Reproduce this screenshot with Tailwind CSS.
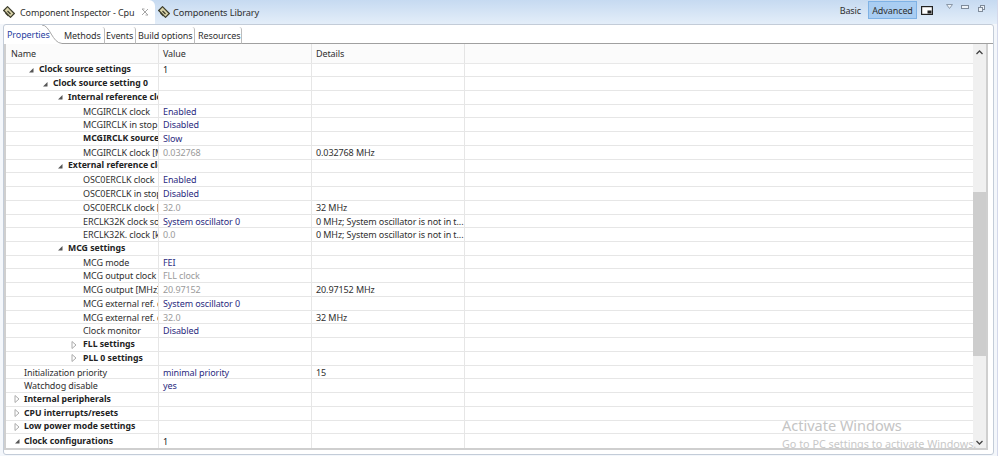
<!DOCTYPE html>
<html>
<head>
<meta charset="utf-8">
<script src="https://cdn.jsdelivr.net/npm/@tailwindcss/browser@4"></script>
</head>
<body class="m-0 overflow-hidden bg-white">
<div class="w-[998px] h-[456px] relative flex flex-col overflow-hidden bg-[#f4f7fb] border-r border-[#d4d8ea] text-[9px] tracking-[-0.1px] leading-[13px] text-[#2f2f2f] font-['Noto_Sans','Open_Sans',sans-serif]">
  <!-- top view tabs -->
  <div class="h-[24px] flex items-start bg-gradient-to-b from-[#c6daf1] to-[#e4eef9] shrink-0">
    <div class="w-[155px] h-[24px] bg-white rounded-tr-[6px] flex items-center pl-[3px] gap-[5px] text-[9px] whitespace-nowrap shrink-0">
      <svg class="shrink-0" width="12" height="12" viewBox="0 0 12 12"><path d="M0.7 4.5 L4.5 0.7 L11.3 7.5 L7.5 11.3 Z" fill="#d8d2a8" stroke="#3b3b2a" stroke-width="1.2"/><path d="M2.5 7 L5.5 10 M4.5 5 L7.5 8" stroke="#3b3b2a" stroke-width="1.2"/></svg>
      <span>Component Inspector - Cpu</span>
      <svg class="shrink-0 ml-[2px]" width="8" height="8" viewBox="0 0 8 8"><path d="M1 1 L7 7 M7 1 L1 7 M1 1 H3.5 M4.5 7 H7" stroke="#a5a5a5" stroke-width="1" fill="none"/></svg>
    </div>
    <div class="flex items-center gap-[3px] pl-[3px] h-[24px] text-[9.2px] whitespace-nowrap">
      <svg class="shrink-0" width="12" height="12" viewBox="0 0 12 12"><path d="M0.7 4.5 L4.5 0.7 L11.3 7.5 L7.5 11.3 Z" fill="#d8d2a8" stroke="#3b3b2a" stroke-width="1.2"/><path d="M2.5 7 L5.5 10 M4.5 5 L7.5 8" stroke="#3b3b2a" stroke-width="1.2"/></svg>
      <span>Components Library</span>
    </div>
    <div class="ml-auto flex items-start pr-[12px] whitespace-nowrap">
      <span class="mt-[4px] mr-[7px]">Basic</span>
      <span class="mt-[1px] h-[18px] w-[49px] bg-[#a9cdf2] border border-[#7fb2e5] flex items-center justify-center mr-[4px]">Advanced</span>
      <svg class="mt-[6px] mr-[13px]" width="12" height="9" viewBox="0 0 12 9"><rect x="0.6" y="0.6" width="10.8" height="7.8" fill="#fff" stroke="#222" stroke-width="1.2"/><rect x="6.5" y="4.5" width="4" height="3" fill="#222"/></svg>
      <svg class="mt-[4px] mr-[8px]" width="7" height="5" viewBox="0 0 7 5"><path d="M0.5 0.5 H6.5 L3.5 4.5 Z" fill="#eef3f8" stroke="#8b98a8"/></svg>
      <svg class="mt-[5px] mr-[9px]" width="8" height="4" viewBox="0 0 8 4"><rect x="0.5" y="0.5" width="7" height="3" fill="#eef3f8" stroke="#7f8b9a"/></svg>
      <svg class="mt-[5px]" width="7" height="7" viewBox="0 0 7 7"><rect x="2.5" y="0.5" width="4" height="4" fill="#eef3f8" stroke="#7f8b9a"/><rect x="0.5" y="2.5" width="4" height="4" fill="#eef3f8" stroke="#7f8b9a"/></svg>
    </div>
  </div>
  <!-- panel -->
  <div class="absolute left-[3px] top-[24px] w-[991px] h-[431px] bg-white border border-[#c3ccd8] rounded-[3px] flex flex-col">
    <!-- sub tabs -->
    <div class="h-[19px] flex items-end shrink-0 text-[#303030] whitespace-nowrap">
      <div class="relative w-[58px] h-[19px] flex items-center pl-[3px] text-[#2a3f9f]">
        <span>Properties</span>
        <svg class="absolute left-[38px] top-0" width="20" height="19" viewBox="0 0 20 19"><path d="M0 0 C8 0 10 18 20 18.5" fill="none" stroke="#a8a8a8"/></svg>
      </div>
      <div class="w-[43px] h-[17px] flex items-center pl-[2px] border-r border-b border-b-[#a0a0a0] border-r-[#bcbcbc] rounded-tr-[3px]">Methods</div>
      <div class="w-[31px] h-[17px] flex items-center pl-[1px] border-r border-b border-b-[#a0a0a0] border-r-[#bcbcbc] rounded-tr-[3px]">Events</div>
      <div class="w-[59px] h-[17px] flex items-center pl-[2px] border-r border-b border-b-[#a0a0a0] border-r-[#bcbcbc] rounded-tr-[3px]">Build options</div>
      <div class="w-[47px] h-[17px] flex items-center pl-[3px] border-r border-b border-b-[#a0a0a0] border-r-[#bcbcbc] rounded-tr-[3px]">Resources</div>
      <div class="flex-1 h-[17px] border-b border-[#a0a0a0]"></div>
    </div>
    <!-- body -->
    <div class="h-[406px] mr-[5px] shrink-0 flex border-l-[2px] border-r-[2px] border-b-[2px] border-[#cfcfcf] min-h-0">
      <div class="flex-1 flex flex-col min-w-0">
        <div class="h-[19.5px] grid grid-cols-[153px_153px_153px_1fr] items-center bg-[#fbfbfb] border-b border-[#e8e8e8] shrink-0">
          <div class="pl-[5px] pt-[1px] border-r border-[#e4e4e4] h-full flex items-center">Name</div>
          <div class="pl-[4px] pt-[1px] border-r border-[#e4e4e4] h-full flex items-center">Value</div>
          <div class="pl-[4px] pt-[1px] border-r border-[#e4e4e4] h-full flex items-center">Details</div>
          <div></div>
        </div>
        <div class="flex-1 grid grid-rows-[repeat(28,1fr)] min-h-0">

<div class="grid grid-cols-[153px_153px_153px_1fr] border-b border-[#e6e6e6] min-h-0"><div class="border-r border-[#e6e6e6] overflow-hidden whitespace-nowrap flex items-center font-bold text-[#222] text-[8.7px] tracking-normal pl-[22px]"><span class="w-[11px] shrink-0"><svg width="6" height="6" viewBox="0 0 6 6"><path d="M5.5 1 V5.5 H1 Z" fill="#555"/></svg></span>Clock source settings</div><div class="border-r border-[#e6e6e6] pl-[4px] flex items-center whitespace-nowrap overflow-hidden text-[#222]">1</div><div class="border-r border-[#e6e6e6]"></div><div></div></div>
<div class="grid grid-cols-[153px_153px_153px_1fr] border-b border-[#e6e6e6] min-h-0"><div class="border-r border-[#e6e6e6] overflow-hidden whitespace-nowrap flex items-center font-bold text-[#222] text-[8.7px] tracking-normal pl-[36px]"><span class="w-[11px] shrink-0"><svg width="6" height="6" viewBox="0 0 6 6"><path d="M5.5 1 V5.5 H1 Z" fill="#555"/></svg></span>Clock source setting 0</div><div class="border-r border-[#e6e6e6]"></div><div class="border-r border-[#e6e6e6]"></div><div></div></div>
<div class="grid grid-cols-[153px_153px_153px_1fr] border-b border-[#e6e6e6] min-h-0"><div class="border-r border-[#e6e6e6] overflow-hidden whitespace-nowrap flex items-center font-bold text-[#222] text-[8.7px] tracking-normal pl-[51px]"><span class="w-[11px] shrink-0"><svg width="6" height="6" viewBox="0 0 6 6"><path d="M5.5 1 V5.5 H1 Z" fill="#555"/></svg></span>Internal reference clock</div><div class="border-r border-[#e6e6e6]"></div><div class="border-r border-[#e6e6e6]"></div><div></div></div>
<div class="grid grid-cols-[153px_153px_153px_1fr] border-b border-[#e6e6e6] min-h-0"><div class="border-r border-[#e6e6e6] overflow-hidden whitespace-nowrap flex items-center pl-[77px]">MCGIRCLK clock</div><div class="border-r border-[#e6e6e6] pl-[4px] flex items-center text-[#2b2b80]">Enabled</div><div class="border-r border-[#e6e6e6]"></div><div></div></div>
<div class="grid grid-cols-[153px_153px_153px_1fr] border-b border-[#e6e6e6] min-h-0"><div class="border-r border-[#e6e6e6] overflow-hidden whitespace-nowrap flex items-center pl-[77px]">MCGIRCLK in stop</div><div class="border-r border-[#e6e6e6] pl-[4px] flex items-center text-[#2b2b80]">Disabled</div><div class="border-r border-[#e6e6e6]"></div><div></div></div>
<div class="grid grid-cols-[153px_153px_153px_1fr] border-b border-[#e6e6e6] min-h-0"><div class="border-r border-[#e6e6e6] overflow-hidden whitespace-nowrap flex items-center pl-[77px] font-bold text-[#222] text-[8.7px] tracking-normal">MCGIRCLK source</div><div class="border-r border-[#e6e6e6] pl-[4px] flex items-center text-[#2b2b80]">Slow</div><div class="border-r border-[#e6e6e6]"></div><div></div></div>
<div class="grid grid-cols-[153px_153px_153px_1fr] border-b border-[#e6e6e6] min-h-0"><div class="border-r border-[#e6e6e6] overflow-hidden whitespace-nowrap flex items-center pl-[77px]">MCGIRCLK clock [MHz]</div><div class="border-r border-[#e6e6e6] pl-[4px] flex items-center text-[#9a9a9a]">0.032768</div><div class="border-r border-[#e6e6e6] pl-[4px] flex items-center">0.032768 MHz</div><div></div></div>
<div class="grid grid-cols-[153px_153px_153px_1fr] border-b border-[#e6e6e6] min-h-0"><div class="border-r border-[#e6e6e6] overflow-hidden whitespace-nowrap flex items-center font-bold text-[#222] text-[8.7px] tracking-normal pl-[51px]"><span class="w-[11px] shrink-0"><svg width="6" height="6" viewBox="0 0 6 6"><path d="M5.5 1 V5.5 H1 Z" fill="#555"/></svg></span>External reference clock</div><div class="border-r border-[#e6e6e6]"></div><div class="border-r border-[#e6e6e6]"></div><div></div></div>
<div class="grid grid-cols-[153px_153px_153px_1fr] border-b border-[#e6e6e6] min-h-0"><div class="border-r border-[#e6e6e6] overflow-hidden whitespace-nowrap flex items-center pl-[77px]">OSC0ERCLK clock</div><div class="border-r border-[#e6e6e6] pl-[4px] flex items-center text-[#2b2b80]">Enabled</div><div class="border-r border-[#e6e6e6]"></div><div></div></div>
<div class="grid grid-cols-[153px_153px_153px_1fr] border-b border-[#e6e6e6] min-h-0"><div class="border-r border-[#e6e6e6] overflow-hidden whitespace-nowrap flex items-center pl-[77px]">OSC0ERCLK in stop</div><div class="border-r border-[#e6e6e6] pl-[4px] flex items-center text-[#2b2b80]">Disabled</div><div class="border-r border-[#e6e6e6]"></div><div></div></div>
<div class="grid grid-cols-[153px_153px_153px_1fr] border-b border-[#e6e6e6] min-h-0"><div class="border-r border-[#e6e6e6] overflow-hidden whitespace-nowrap flex items-center pl-[77px]">OSC0ERCLK clock [MHz]</div><div class="border-r border-[#e6e6e6] pl-[4px] flex items-center text-[#9a9a9a]">32.0</div><div class="border-r border-[#e6e6e6] pl-[4px] flex items-center">32 MHz</div><div></div></div>
<div class="grid grid-cols-[153px_153px_153px_1fr] border-b border-[#e6e6e6] min-h-0"><div class="border-r border-[#e6e6e6] overflow-hidden whitespace-nowrap flex items-center pl-[77px]">ERCLK32K clock source</div><div class="border-r border-[#e6e6e6] pl-[4px] flex items-center text-[#2b2b80] whitespace-nowrap">System oscillator 0</div><div class="border-r border-[#e6e6e6] pl-[4px] flex items-center whitespace-nowrap overflow-hidden">0 MHz; System oscillator is not in t...</div><div></div></div>
<div class="grid grid-cols-[153px_153px_153px_1fr] border-b border-[#e6e6e6] min-h-0"><div class="border-r border-[#e6e6e6] overflow-hidden whitespace-nowrap flex items-center pl-[77px]">ERCLK32K. clock [kHz]</div><div class="border-r border-[#e6e6e6] pl-[4px] flex items-center text-[#9a9a9a]">0.0</div><div class="border-r border-[#e6e6e6] pl-[4px] flex items-center whitespace-nowrap overflow-hidden">0 MHz; System oscillator is not in t...</div><div></div></div>
<div class="grid grid-cols-[153px_153px_153px_1fr] border-b border-[#e6e6e6] min-h-0"><div class="border-r border-[#e6e6e6] overflow-hidden whitespace-nowrap flex items-center font-bold text-[#222] text-[8.7px] tracking-normal pl-[51px]"><span class="w-[11px] shrink-0"><svg width="6" height="6" viewBox="0 0 6 6"><path d="M5.5 1 V5.5 H1 Z" fill="#555"/></svg></span>MCG settings</div><div class="border-r border-[#e6e6e6]"></div><div class="border-r border-[#e6e6e6]"></div><div></div></div>
<div class="grid grid-cols-[153px_153px_153px_1fr] border-b border-[#e6e6e6] min-h-0"><div class="border-r border-[#e6e6e6] overflow-hidden whitespace-nowrap flex items-center pl-[77px]">MCG mode</div><div class="border-r border-[#e6e6e6] pl-[4px] flex items-center text-[#2b2b80]">FEI</div><div class="border-r border-[#e6e6e6]"></div><div></div></div>
<div class="grid grid-cols-[153px_153px_153px_1fr] border-b border-[#e6e6e6] min-h-0"><div class="border-r border-[#e6e6e6] overflow-hidden whitespace-nowrap flex items-center pl-[77px]">MCG output clock</div><div class="border-r border-[#e6e6e6] pl-[4px] flex items-center text-[#9a9a9a]">FLL clock</div><div class="border-r border-[#e6e6e6]"></div><div></div></div>
<div class="grid grid-cols-[153px_153px_153px_1fr] border-b border-[#e6e6e6] min-h-0"><div class="border-r border-[#e6e6e6] overflow-hidden whitespace-nowrap flex items-center pl-[77px]">MCG output [MHz]</div><div class="border-r border-[#e6e6e6] pl-[4px] flex items-center text-[#9a9a9a]">20.97152</div><div class="border-r border-[#e6e6e6] pl-[4px] flex items-center">20.97152 MHz</div><div></div></div>
<div class="grid grid-cols-[153px_153px_153px_1fr] border-b border-[#e6e6e6] min-h-0"><div class="border-r border-[#e6e6e6] overflow-hidden whitespace-nowrap flex items-center pl-[77px]">MCG external ref. clock</div><div class="border-r border-[#e6e6e6] pl-[4px] flex items-center text-[#2b2b80] whitespace-nowrap">System oscillator 0</div><div class="border-r border-[#e6e6e6]"></div><div></div></div>
<div class="grid grid-cols-[153px_153px_153px_1fr] border-b border-[#e6e6e6] min-h-0"><div class="border-r border-[#e6e6e6] overflow-hidden whitespace-nowrap flex items-center pl-[77px]">MCG external ref. clock</div><div class="border-r border-[#e6e6e6] pl-[4px] flex items-center text-[#9a9a9a]">32.0</div><div class="border-r border-[#e6e6e6] pl-[4px] flex items-center">32 MHz</div><div></div></div>
<div class="grid grid-cols-[153px_153px_153px_1fr] border-b border-[#e6e6e6] min-h-0"><div class="border-r border-[#e6e6e6] overflow-hidden whitespace-nowrap flex items-center pl-[77px]">Clock monitor</div><div class="border-r border-[#e6e6e6] pl-[4px] flex items-center text-[#2b2b80]">Disabled</div><div class="border-r border-[#e6e6e6]"></div><div></div></div>
<div class="grid grid-cols-[153px_153px_153px_1fr] border-b border-[#e6e6e6] min-h-0"><div class="border-r border-[#e6e6e6] overflow-hidden whitespace-nowrap flex items-center font-bold text-[#222] text-[8.7px] tracking-normal pl-[65px]"><span class="w-[12px] shrink-0"><svg width="6" height="8" viewBox="0 0 6 8"><path d="M1 0.5 L5 4 L1 7.5 Z" fill="#fff" stroke="#aaa"/></svg></span>FLL settings</div><div class="border-r border-[#e6e6e6]"></div><div class="border-r border-[#e6e6e6]"></div><div></div></div>
<div class="grid grid-cols-[153px_153px_153px_1fr] border-b border-[#e6e6e6] min-h-0"><div class="border-r border-[#e6e6e6] overflow-hidden whitespace-nowrap flex items-center font-bold text-[#222] text-[8.7px] tracking-normal pl-[65px]"><span class="w-[12px] shrink-0"><svg width="6" height="8" viewBox="0 0 6 8"><path d="M1 0.5 L5 4 L1 7.5 Z" fill="#fff" stroke="#aaa"/></svg></span>PLL 0 settings</div><div class="border-r border-[#e6e6e6]"></div><div class="border-r border-[#e6e6e6]"></div><div></div></div>
<div class="grid grid-cols-[153px_153px_153px_1fr] border-b border-[#e6e6e6] min-h-0"><div class="border-r border-[#e6e6e6] overflow-hidden whitespace-nowrap flex items-center pl-[18px]">Initialization priority</div><div class="border-r border-[#e6e6e6] pl-[4px] flex items-center text-[#2b2b80]">minimal priority</div><div class="border-r border-[#e6e6e6] pl-[4px] flex items-center">15</div><div></div></div>
<div class="grid grid-cols-[153px_153px_153px_1fr] border-b border-[#e6e6e6] min-h-0"><div class="border-r border-[#e6e6e6] overflow-hidden whitespace-nowrap flex items-center pl-[18px]">Watchdog disable</div><div class="border-r border-[#e6e6e6] pl-[4px] flex items-center text-[#2b2b80]">yes</div><div class="border-r border-[#e6e6e6]"></div><div></div></div>
<div class="grid grid-cols-[153px_153px_153px_1fr] border-b border-[#e6e6e6] min-h-0"><div class="border-r border-[#e6e6e6] overflow-hidden whitespace-nowrap flex items-center font-bold text-[#222] text-[8.7px] tracking-normal pl-[8px]"><span class="w-[10px] shrink-0"><svg width="6" height="8" viewBox="0 0 6 8"><path d="M1 0.5 L5 4 L1 7.5 Z" fill="#fff" stroke="#aaa"/></svg></span>Internal peripherals</div><div class="border-r border-[#e6e6e6]"></div><div class="border-r border-[#e6e6e6]"></div><div></div></div>
<div class="grid grid-cols-[153px_153px_153px_1fr] border-b border-[#e6e6e6] min-h-0"><div class="border-r border-[#e6e6e6] overflow-hidden whitespace-nowrap flex items-center font-bold text-[#222] text-[8.7px] tracking-normal pl-[8px]"><span class="w-[10px] shrink-0"><svg width="6" height="8" viewBox="0 0 6 8"><path d="M1 0.5 L5 4 L1 7.5 Z" fill="#fff" stroke="#aaa"/></svg></span>CPU interrupts/resets</div><div class="border-r border-[#e6e6e6]"></div><div class="border-r border-[#e6e6e6]"></div><div></div></div>
<div class="grid grid-cols-[153px_153px_153px_1fr] border-b border-[#e6e6e6] min-h-0"><div class="border-r border-[#e6e6e6] overflow-hidden whitespace-nowrap flex items-center font-bold text-[#222] text-[8.7px] tracking-normal pl-[8px]"><span class="w-[10px] shrink-0"><svg width="6" height="8" viewBox="0 0 6 8"><path d="M1 0.5 L5 4 L1 7.5 Z" fill="#fff" stroke="#aaa"/></svg></span>Low power mode settings</div><div class="border-r border-[#e6e6e6]"></div><div class="border-r border-[#e6e6e6]"></div><div></div></div>
<div class="grid grid-cols-[153px_153px_153px_1fr] min-h-0"><div class="border-r border-[#e6e6e6] overflow-hidden whitespace-nowrap flex items-center font-bold text-[#222] text-[8.7px] tracking-normal pl-[8px]"><span class="w-[10px] shrink-0"><svg width="6" height="6" viewBox="0 0 6 6"><path d="M5.5 1 V5.5 H1 Z" fill="#555"/></svg></span>Clock configurations</div><div class="border-r border-[#e6e6e6] pl-[4px] flex items-center text-[#222]">1</div><div class="border-r border-[#e6e6e6]"></div><div></div></div>
        </div>
      </div>
      <!-- scrollbar -->
      <div class="w-[13px] shrink-0 bg-[#f0f0f0] relative">
        <svg class="absolute left-[3px] top-[6px]" width="7" height="5" viewBox="0 0 7 5"><path d="M0.5 4 L3.5 1 L6.5 4" fill="none" stroke="#444" stroke-width="1.3"/></svg>
        <div class="absolute left-0 right-0 top-[148px] h-[164px] bg-[#cdcdcd]"></div>
        <svg class="absolute left-[3px] bottom-[3px]" width="7" height="5" viewBox="0 0 7 5"><path d="M0.5 1 L3.5 4 L6.5 1" fill="none" stroke="#444" stroke-width="1.3"/></svg>
      </div>
    </div>
  </div>
  <!-- watermark -->
  <div class="absolute left-[782px] top-[416px] text-[14.5px] tracking-normal leading-[18px] text-[#c4c4c4] whitespace-nowrap">Activate Windows</div>
  <div class="absolute left-[782px] top-[436px] h-[12px] overflow-hidden text-[10.8px] tracking-normal leading-[16px] text-[#c8c8c8] whitespace-nowrap">Go to PC settings to activate Windows.</div>
</div>
</body>
</html>
